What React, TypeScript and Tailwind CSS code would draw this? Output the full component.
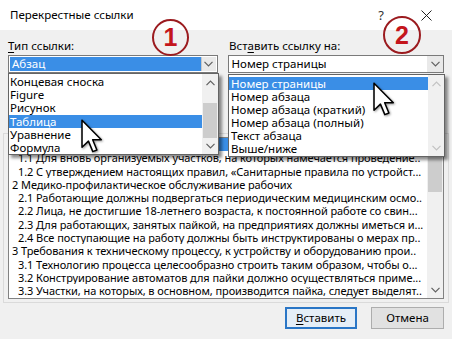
import React from 'react';

const mainRows = [
  { text: '1 Общие положения', indent: false },
  { text: '1.1 Для вновь организуемых участков, на которых намечается проведение..', indent: true },
  { text: '1.2 С утверждением настоящих правил, «Санитарные правила по устройст...', indent: true },
  { text: '2 Медико-профилактическое обслуживание рабочих', indent: false },
  { text: '2.1 Работающие должны подвергаться периодическим медицинским осмо..', indent: true },
  { text: '2.2 Лица, не достигшие 18-летнего возраста, к постоянной работе со свин...', indent: true },
  { text: '2.3 Для работающих, занятых пайкой, на предприятиях должны иметься и...', indent: true },
  { text: '2.4 Все поступающие на работу должны быть инструктированы о мерах пр..', indent: true },
  { text: '3 Требования к техническому процессу, к устройству и оборудованию прои..', indent: false },
  { text: '3.1 Технологию процесса целесообразно строить таким образом, чтобы о...', indent: true },
  { text: '3.2 Конструирование автоматов для пайки должно осуществляться приме...', indent: true },
  { text: '3.3 Участки, на которых, в основном, производится пайка, следует выделят..', indent: true },
];

const typeItems = ['Концевая сноска', 'Figure', 'Рисунок', 'Таблица', 'Уравнение', 'Формула'];
const refItems = [
  'Номер страницы',
  'Номер абзаца',
  'Номер абзаца (краткий)',
  'Номер абзаца (полный)',
  'Текст абзаца',
  'Выше/ниже',
];

function Chevron({ up = false, color = '#606060' }: { up?: boolean; color?: string }) {
  return (
    <svg width="9" height="6" viewBox="0 0 9 6" className={up ? 'rotate-180' : ''}>
      <path d="M0.5 0.8 L4.5 4.8 L8.5 0.8" fill="none" stroke={color} strokeWidth="1.2" />
    </svg>
  );
}

function Cursor({ className }: { className: string }) {
  return (
    <svg className={className} width="22" height="35" viewBox="-0.6 -0.6 13 20.5">
      <path
        d="M0 0 L0 16 L3.8 12.4 L6.4 18.6 L8.8 17.6 L6.3 11.6 L11.4 11.6 Z"
        fill="white"
        stroke="black"
        strokeWidth="0.9"
        strokeLinejoin="round"
      />
    </svg>
  );
}

function Badge({ n, className }: { n: string; className: string }) {
  return (
    <div
      className={`absolute flex items-center justify-center rounded-full border-2 border-[#9b1b1f] font-['Liberation_Sans',sans-serif] text-[25px] font-bold text-[#c4161c] ${className}`}
    >
      {n}
    </div>
  );
}

export default function App() {
  return (
    <div className="relative h-[339px] w-[452px] overflow-hidden bg-[#f0f0f0] font-['Noto_Sans',sans-serif] text-[11.5px] leading-none text-black">
      {/* title bar */}
      <div className="flex h-[30px] items-center bg-white pl-[10px]">
        <span>Перекрестные ссылки</span>
        <span className="ml-auto mr-[37px] text-[13px] text-[#333]">?</span>
        <svg width="11" height="11" viewBox="0 0 11 11" className="mr-[20px]">
          <path d="M0.5 0.5 L10.5 10.5 M10.5 0.5 L0.5 10.5" stroke="#222" strokeWidth="1" />
        </svg>
      </div>

      <div className="px-[8px]">
        {/* labels */}
        <div className="mt-[9px] flex h-[14px] items-center">
          <div className="w-[209px]">
            <span className="underline underline-offset-2">Т</span>ип ссылки:
          </div>
          <div className="ml-[12px]">
            Вст<span className="underline underline-offset-2">а</span>вить ссылку на:
          </div>
        </div>

        {/* combos */}
        <div className="mt-[2px] flex">
          <div className="flex h-[18px] w-[210px] border border-[#7a7a7a] bg-white p-[1px]">
            <div className="flex flex-1 items-center bg-[#3a8ee6] pl-[2px] text-white">Абзац</div>
            <div className="flex w-[15px] items-center justify-center border-l border-[#c8c8c8] bg-[#e9e9e9]">
              <Chevron />
            </div>
          </div>
          <div className="ml-[10px] flex h-[18px] w-[217px] border border-[#7a7a7a] bg-white">
            <div className="flex flex-1 items-center pl-[3px]">Номер страницы</div>
            <div className="flex w-[16px] items-center justify-center bg-[#e9e9e9]">
              <Chevron />
            </div>
          </div>
        </div>

        {/* main list */}
        <div className="-mx-[5px] mt-[60px] border border-[#dadada] px-[4px] pb-[3px] pt-[3px]">
          <div className="flex h-[162px] border border-[#828282] bg-white">
            <div className="flex-1 overflow-hidden text-[11px] tracking-[-0.08px]">
              {mainRows.map((r, i) => (
                <div
                  key={i}
                  className={`h-[13.3px] overflow-hidden whitespace-nowrap leading-[13.3px] ${
                    r.indent ? 'pl-[9px]' : 'pl-[3px]'
                  } ${i === 0 ? 'bg-[#3a8ee6] text-white' : ''}`}
                >
                  {r.text}
                </div>
              ))}
            </div>
            <div className="flex w-[16px] flex-col bg-[#f0f0f0]">
              <div className="h-[3px]" />
              <div className="mx-[1px] h-[51px] bg-[#cdcdcd]" />
              <div className="flex-1" />
              <div className="flex h-[17px] items-center justify-center">
                <Chevron />
              </div>
            </div>
          </div>
        </div>

        {/* buttons */}
        <div className="mt-[4px] flex justify-end gap-[14px]">
          <button className="flex h-[22px] w-[72px] items-center justify-center border-2 border-[#2a76c6] bg-[#e5eef7] text-[11.5px]">
            <span className="underline underline-offset-2">В</span>ставить
          </button>
          <button className="flex h-[22px] w-[73px] items-center justify-center border border-[#adadad] bg-[#e1e1e1] text-[11.5px]">
            Отмена
          </button>
        </div>
      </div>

      {/* left dropdown list */}
      <div className="absolute left-[8px] top-[73px] flex h-[82px] w-[211px] border border-[#646464] bg-white shadow-[3px_3px_3px_rgba(0,0,0,0.45)]">
        <div className="flex-1 pt-[1px]">
          {typeItems.map((t, i) => (
            <div
              key={t}
              className={`h-[13.2px] whitespace-nowrap pl-[1px] leading-[13.2px] ${
                i === 3 ? 'bg-[#3a8ee6] text-white' : ''
              }`}
            >
              {t}
            </div>
          ))}
        </div>
        <div className="flex w-[16px] flex-col bg-[#f0f0f0]">
          <div className="flex h-[17px] items-center justify-center">
            <Chevron up />
          </div>
          <div className="h-[12px]" />
          <div className="mx-[1px] h-[35px] bg-[#cdcdcd]" />
          <div className="flex flex-1 items-center justify-center">
            <Chevron />
          </div>
        </div>
      </div>

      {/* right dropdown list */}
      <div className="absolute left-[228px] top-[74px] flex h-[83px] w-[217px] border border-[#646464] bg-white shadow-[3px_3px_3px_rgba(0,0,0,0.45)]">
        <div className="flex-1 pt-[2px]">
          {refItems.map((t, i) => (
            <div
              key={t}
              className={`h-[13px] whitespace-nowrap pl-[2px] leading-[13px] ${
                i === 0 ? 'bg-[#3a8ee6] text-white' : ''
              }`}
            >
              {t}
            </div>
          ))}
        </div>
        <div className="flex w-[16px] flex-col bg-[#f0f0f0]">
          <div className="flex h-[17px] items-center justify-center">
            <Chevron up color="#c2c2c2" />
          </div>
          <div className="flex-1" />
          <div className="flex h-[17px] items-center justify-center">
            <Chevron color="#c2c2c2" />
          </div>
        </div>
      </div>

      <Badge n="1" className="left-[152px] top-[19px] h-[37px] w-[37px]" />
      <Badge n="2" className="left-[383px] top-[16px] h-[38px] w-[38px]" />

      <Cursor className="absolute left-[81px] top-[119px] drop-shadow-[1px_1px_1px_rgba(0,0,0,0.4)]" />
      <Cursor className="absolute left-[373px] top-[82px] drop-shadow-[1px_1px_1px_rgba(0,0,0,0.4)]" />
    </div>
  );
}
